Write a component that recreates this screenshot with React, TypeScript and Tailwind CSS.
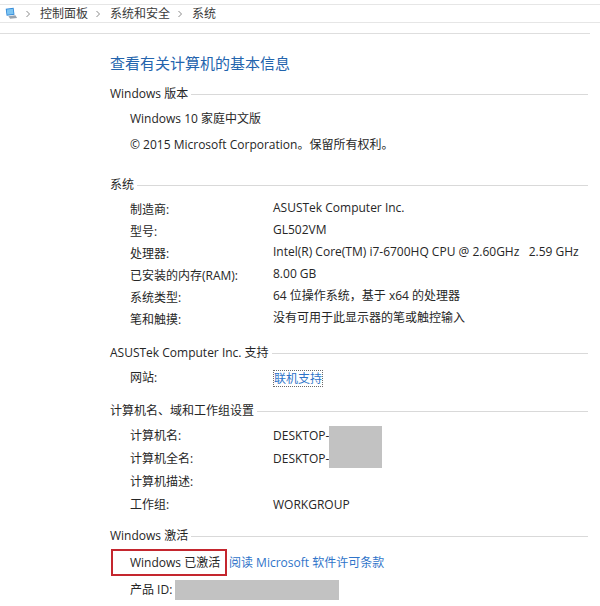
import React from "react";

const font = { fontFamily: '"Open Sans", "Noto Sans CJK SC", sans-serif' };

function Chevron() {
  return (
    <svg width="8" height="8" viewBox="0 0 8 8" className="mx-[6px] shrink-0">
      <path d="M2.5 1 L5.5 4 L2.5 7" fill="none" stroke="#8a8a8a" strokeWidth="1" />
    </svg>
  );
}

function PcIcon() {
  return (
    <svg width="14" height="13" viewBox="0 0 16 14" className="shrink-0">
      <path d="M2 1.5 L11 0.5 L12 8.5 L3 9.5 Z" fill="#2f86d6" />
      <path d="M3 2.5 L10.2 1.7 L11 7.6 L3.8 8.4 Z" fill="#7cc4f2" />
      <path d="M5 10 L13 9 L15 12 L7 13 Z" fill="#9aa3ad" />
    </svg>
  );
}

function Header({ children, className = "" }: { children: React.ReactNode; className?: string }) {
  return (
    <div className={`flex items-center h-[18px] leading-[18px] text-[12px] text-[#262626] ${className}`}>
      <span className="whitespace-nowrap">{children}</span>
      <div className="flex-1 ml-[3px] h-px bg-[#d9d9d9]" />
    </div>
  );
}

function Row({ label, children, h = "h-[22px]" }: { label: string; children?: React.ReactNode; h?: string }) {
  return (
    <div className={`flex items-center ${h} text-[12px] text-[#262626] pl-[20px]`}>
      <span className="w-[143px] whitespace-nowrap">{label}</span>
      <span className="flex items-stretch h-full whitespace-nowrap">{children}</span>
    </div>
  );
}

export default function App() {
  return (
    <div className="w-[600px] h-[606px] bg-white overflow-hidden" style={font}>
      <div className="h-[4px]" />
      <div className="h-[19px] border-t border-b border-[#e6e6e6] flex items-center pl-[4px] text-[12px] text-[#3a3a3a]">
        <PcIcon />
        <Chevron />
        <span className="ml-[2px]">控制面板</span>
        <Chevron />
        <span className="ml-[2px]">系统和安全</span>
        <Chevron />
        <span className="ml-[2px]">系统</span>
      </div>
      <div className="h-[10px]" />
      <div className="h-px bg-[#dedede] mr-[10px]" />

      <div className="pl-[110px] pr-[12px]">
        <div className="mt-[19px] h-[20px] leading-[20px] text-[15px] text-[#2364ad]">查看有关计算机的基本信息</div>

        <Header className="mt-[12px]">Windows 版本</Header>
        <div className="mt-[3px]">
          <div className="h-[26px] flex items-center pl-[20px] text-[12px] text-[#262626]">Windows 10 家庭中文版</div>
          <div className="h-[26px] flex items-center pl-[20px] text-[12px] text-[#262626]">© 2015 Microsoft Corporation。保留所有权利。</div>
        </div>

        <Header className="mt-[18px]">系统</Header>
        <div className="mt-[5px]">
          <Row label="制造商:">ASUSTek Computer Inc.</Row>
          <Row label="型号:">GL502VM</Row>
          <Row label="处理器:">Intel(R) Core(TM) i7-6700HQ CPU @ 2.60GHz&nbsp;&nbsp;&nbsp;2.59 GHz</Row>
          <Row label="已安装的内存(RAM):">8.00 GB</Row>
          <Row label="系统类型:">64 位操作系统，基于 x64 的处理器</Row>
          <Row label="笔和触摸:">没有可用于此显示器的笔或触控输入</Row>
        </div>

        <Header className="mt-[13px]">ASUSTek Computer Inc. 支持</Header>
        <div className="mt-[5px]">
          <Row label="网站:">
            <span className="self-center border border-dotted border-[#6b6b6b] leading-[15px] text-[#2f74c9]">联机支持</span>
          </Row>
        </div>

        <Header className="mt-[13px]">计算机名、域和工作组设置</Header>
        <div className="mt-[4px]">
          <Row label="计算机名:" h="h-[23px]">
            <span className="self-center">DESKTOP-</span>
            <span className="w-[53px] mt-[2px] bg-[#c2c2c2]" />
          </Row>
          <Row label="计算机全名:" h="h-[23px]">
            <span className="self-center">DESKTOP-</span>
            <span className="w-[53px] mb-[2px] bg-[#c2c2c2]" />
          </Row>
          <Row label="计算机描述:" h="h-[23px]" />
          <Row label="工作组:" h="h-[23px]">
            <span className="self-center">WORKGROUP</span>
          </Row>
        </div>

        <Header className="mt-[11px]">Windows 激活</Header>
        <div className="mt-[4px] flex items-center h-[27px] text-[12px]">
          <div className="ml-[1px] h-[27px] w-[116px] border-2 border-[#c4262e] flex items-center pl-[17px] text-[#262626] whitespace-nowrap">
            Windows 已激活
          </div>
          <span className="ml-[2px] text-[#2f74c9] whitespace-nowrap">阅读 Microsoft 软件许可条款</span>
        </div>
        <div className="mt-[4px] flex items-center h-[20px] pl-[20px] text-[12px] text-[#262626]">
          <span className="whitespace-nowrap">产品 ID:</span>
          <span className="ml-[3px] w-[164px] h-[20px] bg-[#c2c2c2]" />
        </div>
      </div>
    </div>
  );
}
